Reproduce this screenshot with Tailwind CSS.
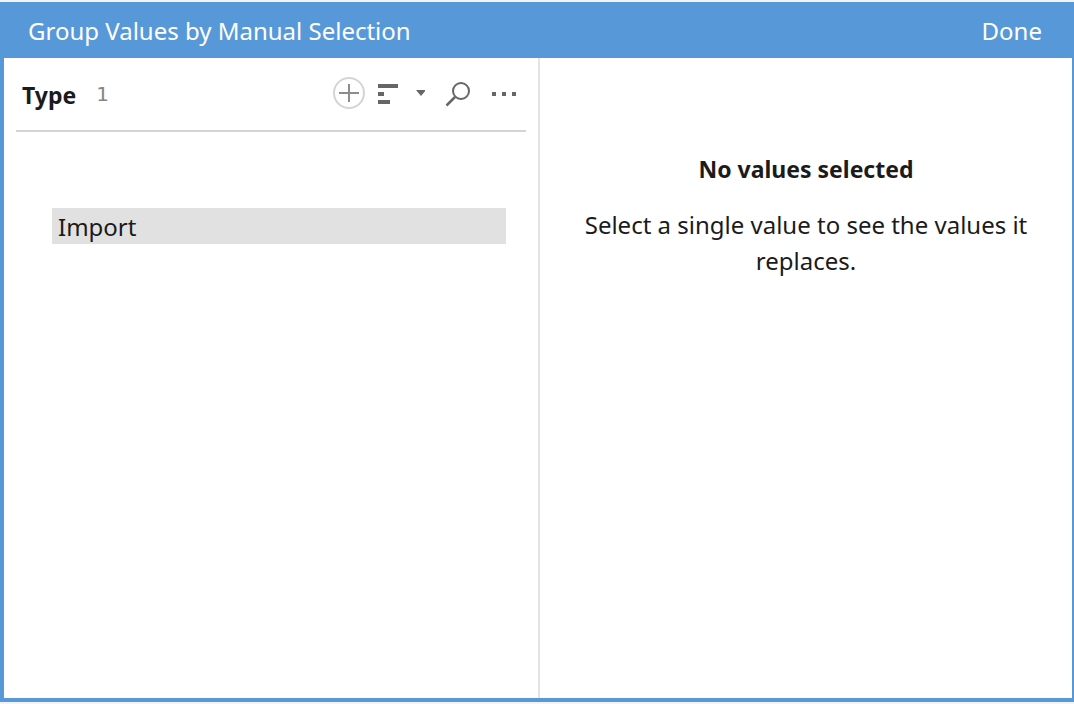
<!DOCTYPE html>
<html lang="en">
<head>
<meta charset="utf-8">
<title>Group Values by Manual Selection</title>
<script src="https://cdn.jsdelivr.net/npm/@tailwindcss/browser@4"></script>
</head>
<body class="bg-[#f3f3f3] font-['Noto_Sans',sans-serif] text-2xl text-[#1b1b1b]">
<div class="flex h-screen flex-col py-[2px]">
  <main class="flex min-h-0 flex-1 flex-col border-b-4 border-l-4 border-r-2 border-[#5799d8] bg-white">
    <header class="flex h-14 shrink-0 items-center justify-between bg-[#5799d8] pt-[2px] pr-[30px] pl-6 text-white">
      <h1 class="leading-8">Group Values by Manual Selection</h1>
      <button type="button" class="leading-8">Done</button>
    </header>
    <div class="grid min-h-0 flex-1 grid-cols-[calc(50%+2px)_1fr]">
      <section class="border-r-2 border-[#e4e4e4] px-3" aria-label="Type values">
        <div class="flex h-[74px] items-center border-b-2 border-[#d4d4d4] pl-[6px]">
          <h2 class="pt-[2px] text-[23px] font-bold">Type</h2>
          <span class="ml-5 font-['DejaVu_Sans',sans-serif] text-xl text-[#858585]">1</span>
          <div class="ml-auto flex items-center pr-2 pb-[2px] text-[#666]">
            <button type="button" aria-label="Add value">
              <svg class="size-8" viewBox="0 0 32 32" fill="none" stroke-width="2"><circle cx="16" cy="16" r="15" stroke="#d4d4d4"/><path d="M6 16h20M16 7v18" stroke="#8c8c8c"/></svg>
            </button>
            <button type="button" class="ml-3 flex items-center" aria-label="Sort">
              <svg class="h-8 w-12" viewBox="0 0 48 32" fill="currentColor"><path d="M1 7h20v4H1zM1 15h6v4H1zM1 23h12v4H1zM39 13h10l-5 6z"/></svg>
            </button>
            <button type="button" class="ml-5" aria-label="Search">
              <svg class="h-8 w-7" viewBox="0 0 28 32" fill="none" stroke="currentColor" stroke-width="2"><circle cx="16" cy="14" r="8"/><path d="M10 20l-8.500 8.500" stroke-width="2.500"/></svg>
            </button>
            <button type="button" class="ml-[17px]" aria-label="More options">
              <svg class="h-8 w-7" viewBox="0 0 28 32" fill="currentColor"><path d="M2 15h4v4H2zM12 15h4v4h-4zM22 15h4v4h-4z"/></svg>
            </button>
          </div>
        </div>
        <ul class="mt-[76px] mr-5 ml-9">
          <li><button type="button" class="block h-9 w-full bg-[#e1e1e1] px-[6px] pt-px text-left leading-9">Import</button></li>
        </ul>
      </section>
      <section class="px-9 pt-[93px] text-center leading-9" aria-live="polite">
        <h2 class="text-[23px] font-bold">No values selected</h2>
        <p class="mt-5">Select a single value to see the values it replaces.</p>
      </section>
    </div>
  </main>
</div>
</body>
</html>
